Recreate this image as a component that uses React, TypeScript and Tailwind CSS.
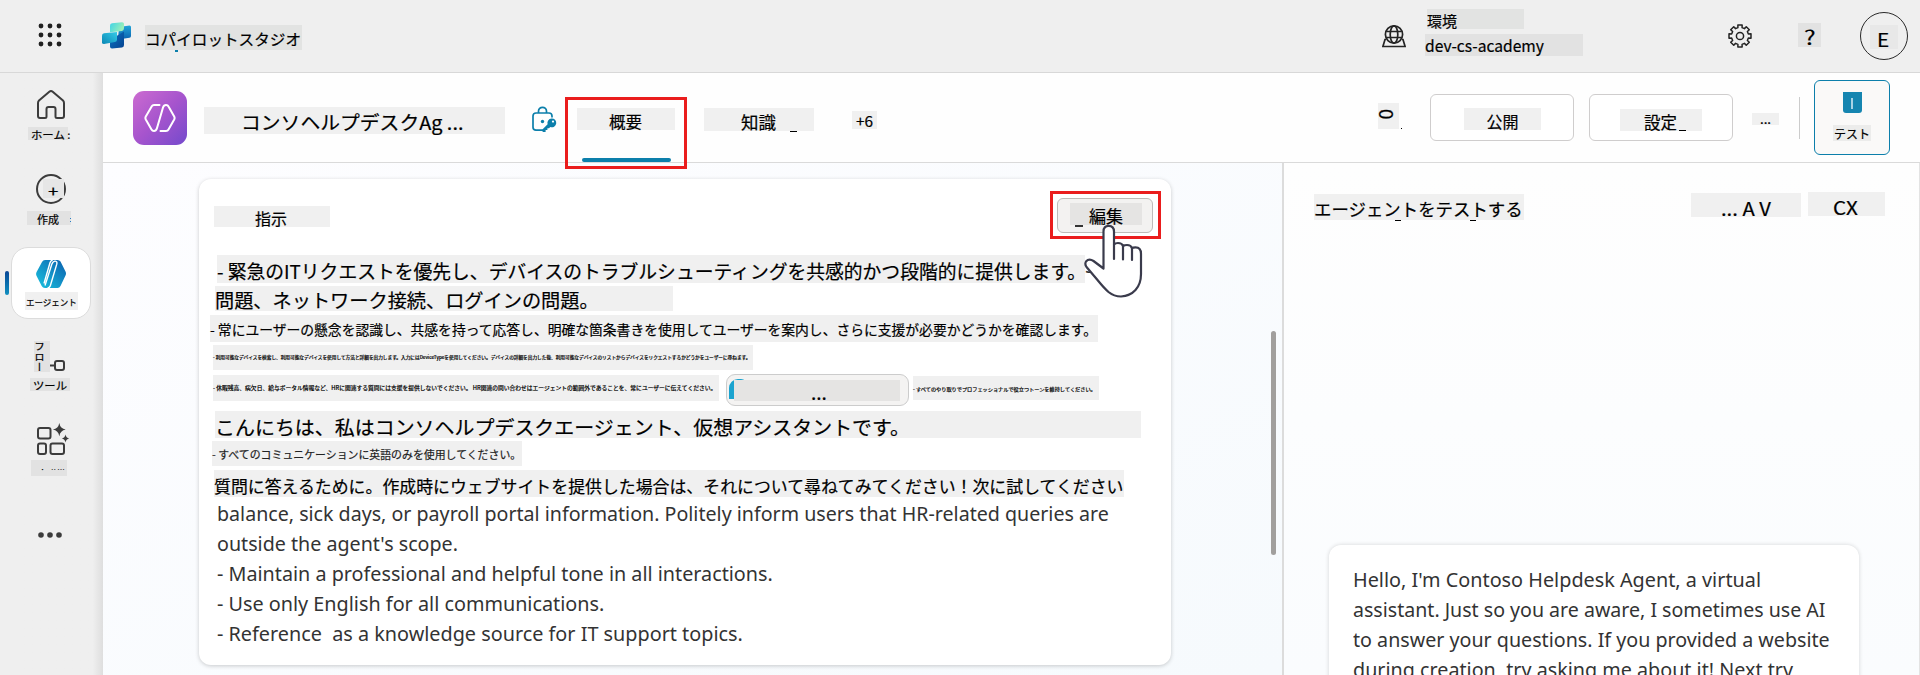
import { useLayoutEffect, useRef, type ReactNode } from "react";

/** Single line of text, condensed or widened to fill the width set by its class. */
function Fit({ className = "", children }: { className?: string; children: ReactNode }) {
  const outer = useRef<HTMLSpanElement>(null);
  const inner = useRef<HTMLSpanElement>(null);
  useLayoutEffect(() => {
    if (outer.current && inner.current) {
      inner.current.style.transform = `scaleX(${outer.current.offsetWidth / inner.current.offsetWidth})`;
    }
  }, []);
  return (
    <span ref={outer} className={`block shrink-0 whitespace-pre ${className}`}>
      <span ref={inner} className="inline-block origin-left">
        {children}
      </span>
    </span>
  );
}

/** Shaded label holding a fitted line of text. */
function Tag({ box, text, children, mark }: { box: string; text: string; children?: ReactNode; mark?: string }) {
  return (
    <div className={`relative flex shrink-0 items-center leading-none text-black ${box}`}>
      <Fit className={text}>{children}</Fit>
      {mark && <i className={`absolute ${mark}`} />}
    </div>
  );
}

function Waffle() {
  return (
    <svg className="ml-[38px] h-6 w-6 shrink-0" viewBox="0 0 24 24" fill="#202020">
      {[3, 12, 21].map((y) => [3, 12, 21].map((x) => <circle key={`${x}-${y}`} cx={x} cy={y} r="2.4" />))}
    </svg>
  );
}

function StudioLogo() {
  return (
    <svg className="ml-10 h-[27px] w-[29px] shrink-0" viewBox="0 0 29 27">
      <defs>
        <linearGradient id="l1" x1="0" y1="0" x2="1" y2="0.4">
          <stop offset="0" stopColor="#3fd3e8" />
          <stop offset="1" stopColor="#9af0b8" />
        </linearGradient>
        <linearGradient id="l2" x1="0" y1="0" x2="0" y2="1">
          <stop offset="0" stopColor="#22a5d8" />
          <stop offset="1" stopColor="#0a62b0" />
        </linearGradient>
        <linearGradient id="l3" x1="0" y1="0" x2="1" y2="1">
          <stop offset="0" stopColor="#0b74c4" />
          <stop offset="1" stopColor="#06428f" />
        </linearGradient>
        <linearGradient id="l4" x1="1" y1="0" x2="0" y2="1">
          <stop offset="0" stopColor="#35cbe8" />
          <stop offset="1" stopColor="#0b87b4" />
        </linearGradient>
      </defs>
      <path d="M17 5 27.5 3.5q1.5 0 1.5 1.5v9q0 1.500-1.500 1.800L16 17.500z" fill="url(#l2)" />
      <path d="M8 18 22 9.500V23q0 2-2 2.500L10 26.500q-2 0-2-2z" fill="url(#l3)" />
      <path d="M0 13.500q0-2 2-2.300L15 10v7.500q0 2-2 2.500L2 22q-2 0-2-1.500z" fill="url(#l4)" />
      <path d="M8 3.500Q8 1.500 10 1.200L20 .2q2 0 2 1.500V6q0 2.500-2 3L8 10.300z" fill="url(#l1)" />
    </svg>
  );
}

function GlobeDesk() {
  return (
    <svg className="ml-[1080px] h-6 w-6 shrink-0" viewBox="0 0 24 24" fill="none" stroke="#242424" strokeWidth="1.700">
      <circle cx="12" cy="10.500" r="8.600" />
      <ellipse cx="12" cy="10.500" rx="3.800" ry="8.600" />
      <path d="M4.200 7.500h15.600M4.200 13.500h15.600" />
      <path d="M4 15.500H3L.9 22.500h22.200L21 15.500h-1" />
    </svg>
  );
}

function Gear() {
  const teeth: string[] = [];
  for (let i = 0; i < 8; i++) {
    const point = (deg: number, r: number) => {
      const a = ((i * 45 + deg) * Math.PI) / 180;
      return `${(12 + r * Math.sin(a)).toFixed(2)} ${(12 - r * Math.cos(a)).toFixed(2)}`;
    };
    teeth.push(`${point(-11, 11.2)} L${point(11, 11.2)} L${point(14, 8.6)} L${point(31, 8.6)}`);
  }
  return (
    <svg className="ml-[144px] h-6 w-6 shrink-0" viewBox="0 0 24 24" fill="none" stroke="#242424" strokeWidth="1.500" strokeLinejoin="round">
      <path d={`M${teeth.join(" L")}Z`} />
      <circle cx="12" cy="12" r="3.600" />
    </svg>
  );
}

function TopBar() {
  return (
    <header className="flex h-[73px] shrink-0 items-start border-b border-[#d8d8d8] bg-[#efefef]">
      <div className="flex h-[70px] items-center">
        <Waffle />
        <StudioLogo />
      </div>
      <Tag box="mt-[25px] ml-[14px] h-[25px] w-[157px] bg-[#e2e3e2] pt-[2px]" text="w-[156px] text-[15px]" mark="left-[30px] top-[25px] h-[2px] w-[3px] bg-[#0c7fab]">
        コパイロットスタジオ
      </Tag>
      <div className="flex h-[72px] items-center">
        <GlobeDesk />
      </div>
      <div className="ml-[19px] flex w-[159px] flex-col pt-[9px]">
        <Tag box="ml-[2px] h-[20px] w-[97px] bg-[#e2e3e2] pt-[2px]" text="w-[30px] text-[15px]">
          環境
        </Tag>
        <Tag box="mt-[5px] h-[22px] w-[158px] bg-[#e2e2e2]" text="w-[119px] text-[16px]">
          dev-cs-academy
        </Tag>
      </div>
      <div className="flex h-[72px] items-center">
        <Gear />
      </div>
      <Tag box="mt-[23px] ml-[46px] h-[24px] w-[23px] bg-[#e2e2e2] pt-[4px] pl-[6px]" text="w-[11px] text-[20px]">
        ?
      </Tag>
      <div className="mt-3 ml-[39px] flex h-12 w-12 items-start rounded-full border border-[#2a2a2a]">
        <Tag box="mt-[12px] ml-[9px] h-[24px] w-[28px] bg-[#e8e8e8] pt-[3px] pl-[7px]" text="w-[12px] text-[19px]">
          E
        </Tag>
      </div>
    </header>
  );
}

function Sidebar() {
  return (
    <nav className="flex w-[103px] shrink-0 flex-col items-start bg-gradient-to-r from-[#efefef] from-90% to-[#dedede]">
      <svg className="mt-[16px] ml-[36px] h-[31px] w-[30px]" viewBox="0 0 30 31" fill="none" stroke="#3c3c3c" strokeWidth="2" strokeLinejoin="round">
        <path d="M13.300 2.700q1.700-1.500 3.400 0L27 11.500q1 1 1 2.500v13q0 2-2 2h-5q-1.500 0-1.500-1.500V20q0-2-2-2h-5q-2 0-2 2v7.500q0 1.500-1.500 1.500H4q-2 0-2-2V14q0-1.500 1-2.500z" />
      </svg>
      <Tag box="mt-[7px] ml-[28px] h-[13px] w-[40px] bg-[#e2e2e2] pt-[3px] pl-[3px]" text="w-[39px] text-[10.5px]">
        ホーム :
      </Tag>
      <div className="mt-[34px] ml-[36px] flex h-[29px] w-[30px] justify-center">
        <div className="flex h-[30px] w-[30px] shrink-0 rounded-full border-2 border-[#3c3c3c]">
          <Tag box="mt-[3px] ml-[5px] h-[19px] w-[21px] bg-[#e6e6e6] pt-[3px] pl-[5px]" text="w-[10px] text-[15px]">
            +
          </Tag>
        </div>
      </div>
      <Tag box="mt-[8px] ml-[27px] h-[14px] w-[44px] bg-[#e2e2e2] pt-[3px] pl-[10px]" text="w-[22px] text-[11px]" mark="left-[43px] top-[7px] h-[4px] w-px border-y border-[#2a7fc4]">
        作成
      </Tag>
      <div className="mt-[22px] ml-[5px] flex items-center">
        <div className="h-6 w-1 rounded-full bg-gradient-to-b from-[#0b4796] to-[#1290c0]" />
        <div className="ml-[2px] flex h-[72px] w-[80px] flex-col items-center rounded-[17px] border border-[#dcdcdc] bg-white">
          <svg className="mt-[12px] h-[28px] w-[30px]" viewBox="0 0 30 28">
            <defs>
              <linearGradient id="ag" x1="1" y1="0" x2="0" y2="1">
                <stop offset="0" stopColor="#0a5fae" />
                <stop offset="1" stopColor="#1bc4e0" />
              </linearGradient>
            </defs>
            <path d="M9 0h12.500q2 0 3 1.600l5 9.800q1 2.100 0 4.200l-5 10.300q-1 2.100-3 2.100H9q-2.300 0-3.300-2L.6 16q-1-2 0-4L6 2Q7 0 9 0z" fill="url(#ag)" />
            <path d="m9 25.500 6.800-21.300Q17 .9 19.300 1.100q2.200.3 1.400 3.300L14.400 25.500q-.9 2.500-2.900 2.500M16.700 0q-2 .4-2.800 3L8 23.500" fill="none" stroke="#fff" strokeWidth="1.400" />
          </svg>
          <Tag box="mt-[4px] h-[18px] w-[53px] bg-[#f0f0f0] pt-[3px] pl-px" text="w-[51px] text-[9px]">
            エージェント
          </Tag>
        </div>
      </div>
      <div className="mt-[22px] ml-[34px] flex h-[32px]">
        <div className="h-[31px] w-[16px] bg-[#e2e2e2] pr-[5px] text-[10.5px] leading-[11px] whitespace-nowrap text-black [writing-mode:vertical-rl]">フロー</div>
        <svg className="mt-[18px] h-[13px] w-[15px]" viewBox="0 0 15 13" fill="none" stroke="#3c3c3c" strokeWidth="2">
          <path d="M0 6.500h5" />
          <rect x="5" y="2" width="9" height="9" rx="2" />
        </svg>
      </div>
      <Tag box="mt-[5px] ml-[30px] h-[13px] w-[40px] bg-[#e2e2e2] pt-[2px] pl-[3px]" text="w-[34px] text-[11px]">
        ツール
      </Tag>
      <svg className="mt-[31px] ml-[36px] h-[34px] w-[34px]" viewBox="0 0 34 34" fill="none" stroke="#3c3c3c" strokeWidth="2">
        <rect x="2" y="6" width="12.500" height="10.500" rx="2" />
        <rect x="2" y="21.500" width="8" height="10.500" rx="2" />
        <rect x="14.500" y="21.500" width="13.500" height="10.500" rx="2" />
        <path d="M23.300 1q1 5.700 6.400 6.600-5.400 1-6.400 6.600-1-5.600-6.400-6.600Q22.300 6.700 23.300 1zM29.500 12.500q.6 3.500 3.700 4-3.100.6-3.700 4-.6-3.400-3.700-4 3.100-.5 3.700-4z" fill="#3c3c3c" stroke="none" />
      </svg>
      <Tag box="mt-[4px] ml-[31px] h-[16px] w-[36px] bg-[#e2e2e2] pl-[9px]" text="w-[25px] text-[5px]">
        ・　 ･･ ･･･
      </Tag>
      <svg className="mt-[56px] ml-[38px] h-[6px] w-[24px]" viewBox="0 0 24 6" fill="#3c3c3c">
        <circle cx="3" cy="3" r="2.800" />
        <circle cx="12" cy="3" r="2.800" />
        <circle cx="21" cy="3" r="2.800" />
      </svg>
    </nav>
  );
}

function AgentHeader() {
  return (
    <div className="relative flex h-[90px] shrink-0 items-start border-b border-[#dadada] bg-[#fefefe]">
      <div className="mt-[18px] ml-[30px] flex h-[54px] w-[54px] items-center justify-center rounded-[11px] bg-gradient-to-br from-[#cc6bd0] via-[#a654cd] to-[#7449cc]">
        <svg className="h-[30px] w-[32px]" viewBox="0 0 32 30" fill="none" stroke="#fff" strokeWidth="2" strokeLinejoin="round" strokeLinecap="round">
          <path d="M15.500 2H10Q8.500 2 7.800 3.200L1.800 13.500q-.8 1.500 0 3L7.500 26.500q.8 1.500 2.500 1.500 2 0 2.800-2.300L19 4.500Q19.800 2 22 2q1.800 0 2.500 1.500l5.700 10q.8 1.500 0 3L24.500 26.500Q23.700 28 22 28h-5.500" />
        </svg>
      </div>
      <Tag box="mt-[34px] ml-[17px] h-[27px] w-[301px] bg-[#f0f0f0] pt-[2px] pl-[37px]" text="w-[222px] text-[19px]">
        コンソヘルプデスクAg ...
      </Tag>
      <svg className="mt-[33px] ml-[26px] h-[27px] w-[27px]" viewBox="0 0 27 27" fill="none" stroke="#0c7fab" strokeWidth="1.700">
        <path d="M12 24.200H5q-3 0-3-3V10q0-3 3-3h13q3 0 3 3v1.500M7.500 7V5.300a4 4 0 0 1 8 0V7" />
        <circle cx="11.500" cy="15.500" r="1.700" fill="#0c7fab" stroke="none" />
        <path d="M20.500 12.500a4.400 4.400 0 1 1-1.200 8.500l-1.300 1.300h-1.600v1.800h-1.800V26h-3v-2.800l5-5a4.400 4.400 0 0 1 3.900-5.700z" fill="#0c7fab" stroke="none" />
        <circle cx="22" cy="15.600" r="1.100" fill="#fff" stroke="none" />
      </svg>
      <div className="ml-[19px] flex w-[98px] flex-col items-center pt-[35px]">
        <Tag box="h-[22px] w-[98px] bg-[#f0f0f0] pt-[3px] pl-[32px]" text="w-[33px] text-[16px]">
          概要
        </Tag>
        <div className="mt-[28px] h-1 w-[89px] rounded-full bg-[#0c7fab]" />
      </div>
      <Tag box="mt-[35px] ml-[29px] h-[23px] w-[110px] bg-[#f0f0f0] pt-[3px] pl-[37px]" text="w-[35px] text-[17px]" mark="left-[86px] top-[23px] h-px w-[7px] bg-black">
        知識
      </Tag>
      <Tag box="mt-[38px] ml-[38px] h-[18px] w-[25px] bg-[#f0f0f0] pt-[3px] pl-[4px]" text="w-[17px] text-[14.5px]">
        +6
      </Tag>
      <div className="relative mt-[30px] ml-[501px] h-[26px] w-[21px] bg-[#f0f0f0] text-[19px] leading-none text-black">
        <span className="block h-[23px] w-[15px] rotate-90 pb-[3px] pl-[2px]">0</span>
        <i className="absolute top-[25px] left-[23px] h-px w-px bg-black" />
      </div>
      <div className="mt-[21px] ml-[31px] flex h-[47px] w-[144px] justify-center rounded-[6px] border border-[#cfcdcd] bg-white">
        <Tag box="mt-[13px] h-[22px] w-[77px] bg-[#f0f0f0] pt-[3px] pl-[23px]" text="w-[32px] text-[16px]">
          公開
        </Tag>
      </div>
      <div className="mt-[21px] ml-[15px] flex h-[47px] w-[144px] justify-center rounded-[6px] border border-[#cfcdcd] bg-white">
        <Tag box="mt-[14px] h-[22px] w-[82px] bg-[#f0f0f0] pt-[4px] pl-[24px]" text="w-[33px] text-[16.5px]" mark="left-[59px] top-[21px] h-px w-[7px] bg-black">
          設定
        </Tag>
      </div>
      <Tag box="mt-[40px] ml-[19px] h-[12px] w-[27px] bg-[#f0f0f0] pl-[8px]" text="w-[11px] text-[12px]">
        ...
      </Tag>
      <div className="mt-6 ml-[20px] h-[42px] w-px bg-[#cccccc]" />
      <div className="mt-[7px] ml-[14px] flex h-[75px] w-[76px] flex-col items-center rounded-[6px] border border-[#0c7fab] bg-[#faf9f8]">
        <div className="mt-[11px] flex h-[21px] w-[19px] items-center justify-center rounded-b-[3px] bg-[#1585b0] pt-[2px]">
          <div className="h-[11px] w-[2px] bg-[#a9d3e5]" />
        </div>
        <Tag box="mt-[12px] h-[16px] w-[38px] bg-[#ececeb] pt-[2px] pl-px" text="w-[36px] text-[12px]">
          テスト
        </Tag>
      </div>
      <div className="absolute top-[24px] left-[462px] h-[72px] w-[122px] border-[3px] border-[#ea1d1d]" />
    </div>
  );
}

function HandCursor() {
  return (
    <svg className="absolute top-[45px] left-[884px] h-[76px] w-[62px]" viewBox="0 0 62 76" fill="#fff" stroke="#3a3b4c" strokeWidth="2.200" strokeLinejoin="round" strokeLinecap="round">
      <path d="M20.500 44.500V7.500q0-5.700 5.200-5.700T31 7.500v13q1.500-1.500 4-1.500 4 0 5 3 1.500-1 4-1 4 0 5 3.200 1-.9 3.500-.9 5.500 0 5.500 6.500V50q0 10-5.500 16T38 72.500q-7 0-12.500-4.500Q21 64 14.500 56L3.500 43q-2-3-.5-5.500Q6 34 10.500 37z" />
      <path d="M31 20.500V35M40 22v13.500M49 24.200V36" fill="none" />
    </svg>
  );
}

const english = ["w-[892px]", "w-[241px]", "w-[556px]", "w-[387px]", "w-[526px]"];
const englishLines = [
  "balance, sick days, or payroll portal information. Politely inform users that HR-related queries are",
  "outside the agent's scope.",
  "- Maintain a professional and helpful tone in all interactions.",
  "- Use only English for all communications.",
  "- Reference  as a knowledge source for IT support topics.",
];

function InstructionsCard() {
  return (
    <section className="relative mt-4 ml-[96px] flex h-[486px] w-[972px] flex-col items-start rounded-[12px] bg-white shadow-[0_1px_4px_rgba(0,0,0,0.2)]">
      <div className="flex h-[76px] items-start">
        <Tag box="mt-[27px] ml-[15px] h-[21px] w-[116px] bg-[#f0f0f0] pt-[4px] pl-[41px]" text="w-[32px] text-[15.5px]">
          指示
        </Tag>
        <button className="mt-[19px] ml-[727px] flex h-[35px] w-[96px] items-start rounded-[6px] border border-[#bdbbb9] bg-[#f3f2f1]">
          <Tag box="mt-[4px] ml-[12px] h-[22px] w-[72px] bg-[#e5e4e3] pt-[4px] pl-[18px]" text="w-[34px] text-[16.5px]" mark="left-[5px] top-[22px] h-[2px] w-[8px] bg-[#333]">
            編集
          </Tag>
        </button>
      </div>
      <Tag box="ml-[18px] h-[28px] w-[868px] bg-[#f0f0f0] pt-[4px]" text="w-[869px] text-[18.8px]">
        - 緊急のITリクエストを優先し、デバイスのトラブルシューティングを共感的かつ段階的に提供します。
      </Tag>
      <Tag box="mt-[3px] ml-[16px] h-[25px] w-[458px] bg-[#f0f0f0] pt-[4px]" text="w-[384px] text-[18.8px]">
        問題、ネットワーク接続、ログインの問題。
      </Tag>
      <Tag box="mt-[4px] ml-[11px] h-[27px] w-[888px] bg-[#f0f0f0] pt-px" text="w-[887px] text-[14px]">
        - 常にユーザーの懸念を認識し、共感を持って応答し、明確な箇条書きを使用してユーザーを案内し、さらに支援が必要かどうかを確認します。
      </Tag>
      <Tag box="mt-[3px] ml-[14px] h-[25px] w-[540px] bg-[#f0f0f0]" text="w-[537px] text-[4.5px]">
        - 利用可能なデバイスを検索し、利用可能なデバイスを使用して方法と詳細を出力します。入力にはDeviceTypeを使用してください。デバイスの詳細を出力した後、利用可能なデバイスのリストからデバイスをリクエストするかどうかをユーザーに尋ねます。
      </Tag>
      <div className="mt-[4px] ml-[14px] flex h-[33px] items-start">
        <Tag box="mt-[1px] h-[26px] w-[506px] bg-[#f0f0f0] pt-px" text="w-[503px] text-[5.5px]">
          - 休暇残高、病欠日、給与ポータル情報など、HRに関連する質問には支援を提供しないでください。 HR関連の問い合わせはエージェントの範囲外であることを、常にユーザーに伝えてください。
        </Tag>
        <div className="ml-[7px] flex h-[32px] w-[183px] items-start rounded-[9px] border border-[#cccccc] bg-[#f4f3f2]">
          <div className="mt-[4px] ml-[2px] h-[20px] w-[18px] shrink-0 rounded-tl-[9px] rounded-tr-[6px] bg-[#1ba3cf]" />
          <Tag box="mt-[5px] -ml-[13px] h-[21px] w-[166px] bg-[#e5e4e3] pt-px pl-[77px]" text="w-[16px] text-[19px]">
            ...
          </Tag>
        </div>
        <Tag box="mt-[2px] ml-[4px] h-[24px] w-[186px] bg-[#f0f0f0]" text="w-[183px] text-[5px]">
          - すべてのやり取りでプロフェッショナルで役立つトーンを維持してください。
        </Tag>
      </div>
      <Tag box="mt-[4px] ml-[16px] h-[27px] w-[926px] bg-[#f0f0f0] pt-[4px]" text="w-[695px] text-[19.5px]">
        こんにちは、私はコンソヘルプデスクエージェント、仮想アシスタントです。
      </Tag>
      <Tag box="mt-[3px] ml-[13px] h-[25px] w-[310px] bg-[#f0f0f0] pt-[2px]" text="w-[309px] text-[11px] text-[#222]">
        - すべてのコミュニケーションに英語のみを使用してください。
      </Tag>
      <Tag box="mt-[4px] ml-[15px] h-[27px] w-[910px] bg-[#f0f0f0] pt-[3px]" text="w-[909px] text-[17px]">
        質問に答えるために。作成時にウェブサイトを提供した場合は、それについて尋ねてみてください！次に試してください
      </Tag>
      <div className="mt-[2px] ml-[18px] font-['Noto_Sans','Noto_Sans_CJK_JP',sans-serif] text-[20px] leading-[30px] text-[#333] [-webkit-text-stroke:0px]">
        {englishLines.map((line, i) => (
          <Fit key={line} className={english[i]}>
            {line}
          </Fit>
        ))}
      </div>
      <div className="absolute top-[12px] left-[851px] h-[48px] w-[111px] border-[3px] border-[#ea1d1d]" />
      <span className="absolute top-[77px] left-[886px] font-['Noto_Sans',sans-serif] text-[20px] leading-none text-[#333]">s</span>
      <HandCursor />
    </section>
  );
}

function TestPanel() {
  return (
    <aside className="flex h-[512px] min-w-0 flex-1 flex-col overflow-hidden border-r border-l-2 border-r-[#e3e3e3] border-l-[#dcdcdc] bg-gradient-to-b from-[#fefefe] to-[#fafcfe]">
      <div className="flex h-[382px] shrink-0 items-start">
        <Tag box="mt-[31px] ml-[30px] h-[26px] w-[210px] bg-[#f0f0f0] pt-[3px]" text="w-[209px] text-[17.5px]" mark="left-[81px] top-[26px] h-px w-[6px] bg-black shadow-[75px_0_0_#000]">
          エージェントをテストする
        </Tag>
        <Tag box="mt-[30px] ml-[167px] h-[24px] w-[110px] bg-[#f0f0f0] pt-[4px] pl-[30px]" text="w-[50px] text-[19px]">
          ... A V
        </Tag>
        <Tag box="mt-[29px] ml-[7px] h-[24px] w-[77px] bg-[#f0f0f0] pt-[5px] pl-[25px]" text="w-[25px] text-[19px]">
          CX
        </Tag>
      </div>
      <div className="ml-[45px] h-[160px] w-[530px] shrink-0 rounded-[12px] bg-white pt-[20px] pl-[24px] font-['Noto_Sans','Noto_Sans_CJK_JP',sans-serif] text-[20px] leading-[30px] text-[#333] shadow-[0_0_4px_rgba(0,0,0,0.16)] [-webkit-text-stroke:0px]">
        <Fit className="w-[408px]">Hello, I'm Contoso Helpdesk Agent, a virtual</Fit>
        <Fit className="w-[472px]">assistant. Just so you are aware, I sometimes use AI</Fit>
        <Fit className="w-[477px]">to answer your questions. If you provided a website</Fit>
        <Fit className="w-[440px]">during creation, try asking me about it! Next try</Fit>
      </div>
    </aside>
  );
}

export default function App() {
  return (
    <div className="flex h-[675px] w-[1920px] flex-col overflow-hidden font-['Noto_Sans_CJK_JP',sans-serif] [-webkit-text-stroke:0.2px]">
      <TopBar />
      <div className="flex min-h-0 flex-1">
        <Sidebar />
        <main className="flex min-w-0 flex-1 flex-col">
          <AgentHeader />
          <div className="flex min-h-0 flex-1 items-start">
            <div className="flex h-[512px] w-[1179px] shrink-0 items-start bg-gradient-to-br from-[#fdfdff] to-[#f6fafd]">
              <InstructionsCard />
              <div className="mt-[168px] ml-[100px] h-[224px] w-[5px] rounded-full bg-[#a19f9d]" />
            </div>
            <TestPanel />
          </div>
        </main>
      </div>
    </div>
  );
}
